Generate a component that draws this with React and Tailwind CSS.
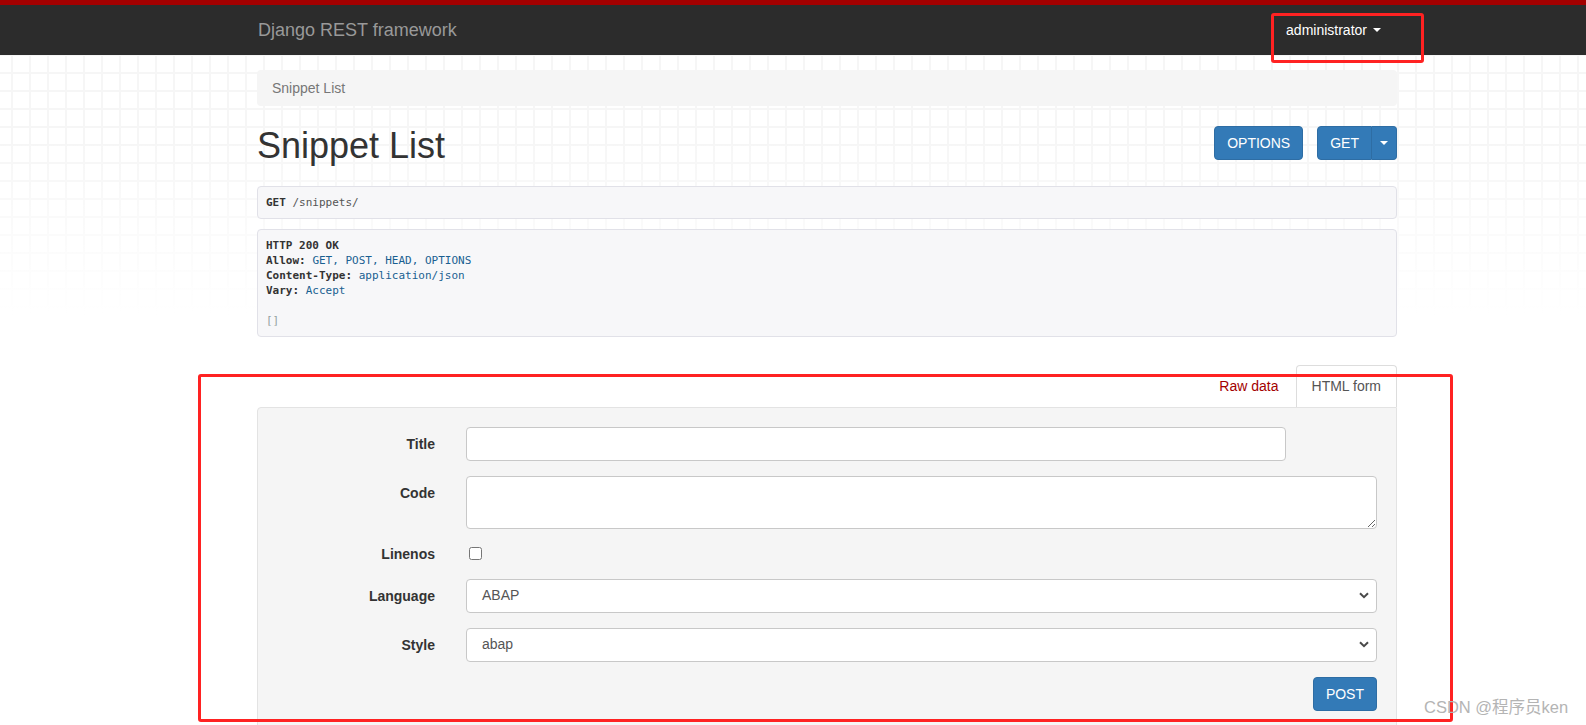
import React from "react";

function Caret({ className = "" }) {
  return (
    <span
      className={
        "inline-block w-0 h-0 border-t-[4px] border-l-[4px] border-r-[4px] border-l-transparent border-r-transparent border-t-white " +
        className
      }
    />
  );
}

function Chevron() {
  return (
    <svg width="10" height="7" viewBox="0 0 10 7" className="mr-[5px]">
      <path d="M1 1.2 L5 5.2 L9 1.2" fill="none" stroke="#4a4a4a" strokeWidth="2" />
    </svg>
  );
}

function FakeSelect({ value }) {
  return (
    <div className="h-[34px] w-full border border-[#c8c8c8] rounded-[4px] bg-white flex items-center justify-between pl-[15px] pr-[2px] text-[14px] text-[#555]">
      <span>{value}</span>
      <Chevron />
    </div>
  );
}

export default function App() {
  const mono = "font-['DejaVu_Sans_Mono',monospace]";
  return (
    <div className="relative h-[725px] w-[1586px] overflow-hidden bg-white font-['Liberation_Sans',Arial,sans-serif] text-[14px] text-[#333]">
      {/* Navbar */}
      <div className="h-[55px] border-t-[5px] border-[#a30000] bg-[#2c2c2c]">
        <div className="ml-[257px] w-[1140px] h-full flex items-center justify-between">
          <span className="ml-[1px] text-[18px] text-[#999] leading-[20px]">Django REST framework</span>
          <span className="text-white text-[14px] leading-[20px] pr-[16px] flex items-center">
            administrator
            <Caret className="ml-[6px]" />
          </span>
        </div>
      </div>

      {/* Body with grid background */}
      <div className="pt-[15px] pb-[40px] [background-image:linear-gradient(to_bottom,rgba(255,255,255,0)_80px,#fff_260px),linear-gradient(to_right,#f6f6f6_2px,transparent_2px),linear-gradient(to_bottom,#f6f6f6_2px,transparent_2px)] [background-size:100%_100%,18px_18px,18px_18px] [background-position:0_0,11px_0,0_17px]">
        <div className="ml-[257px] w-[1140px]">
          {/* Breadcrumb */}
          <div className="h-[36px] bg-[#f5f5f5] rounded-[4px] px-[15px] flex items-center text-[#777] leading-[20px]">
            Snippet List
          </div>

          {/* Header */}
          <div className="mt-[20px] flex items-start justify-between">
            <h1 className="text-[36px] leading-[39.6px] font-normal text-[#333]">Snippet List</h1>
            <div className="flex gap-[14px]">
              <button className="h-[34px] px-[12px] bg-[#337ab7] border border-[#2e6da4] rounded-[4px] text-white text-[14px] leading-[20px]">
                OPTIONS
              </button>
              <div className="flex">
                <button className="h-[34px] px-[12px] bg-[#337ab7] border border-[#2e6da4] rounded-l-[4px] text-white text-[14px] leading-[20px]">
                  GET
                </button>
                <button className="h-[34px] w-[25px] bg-[#337ab7] border border-l-[#255d8f] border-y-[#2e6da4] border-r-[#2e6da4] border-l-0 rounded-r-[4px] flex items-center justify-center">
                  <Caret />
                </button>
              </div>
            </div>
          </div>

          {/* Request */}
          <div className={"mt-[20px] border border-[#e1e1e8] bg-[#f7f7f9] rounded-[4px] px-[8px] py-[8px] text-[11px] leading-[15px] " + mono}>
            <b className="text-[#333]">GET</b> <span className="text-[#555]">/snippets/</span>
          </div>

          {/* Response */}
          <div className={"mt-[10px] border border-[#e1e1e8] bg-[#f7f7f9] rounded-[4px] px-[8px] py-[8px] text-[11px] leading-[15px] " + mono}>
            <div><b className="text-[#333]">HTTP 200 OK</b></div>
            <div><b className="text-[#333]">Allow:</b> <span className="text-[#195f91]">GET, POST, HEAD, OPTIONS</span></div>
            <div><b className="text-[#333]">Content-Type:</b> <span className="text-[#195f91]">application/json</span></div>
            <div><b className="text-[#333]">Vary:</b> <span className="text-[#195f91]">Accept</span></div>
            <div className="h-[15px]" />
            <div className="text-[#93a1a1]">[]</div>
          </div>

          {/* Tabs */}
          <div className="mt-[28px] flex justify-end">
            <div className="h-[42px] px-[15px] mr-[2px] flex items-center text-[#a30000] leading-[20px] whitespace-nowrap">Raw data</div>
            <div className="h-[42px] px-[15px] flex items-center border-t border-l border-r border-[#ddd] rounded-t-[4px] bg-white text-[#555] leading-[20px] whitespace-nowrap">
              HTML form
            </div>
          </div>

          {/* Form panel */}
          <div className="border border-[#e3e3e3] bg-[#f5f5f5] rounded-b-[4px] rounded-tl-[4px] pt-[19px] px-[19px] pb-[19px]">
            <div className="grid grid-cols-[158px_1fr] gap-x-[31px]">
              {/* Title */}
              <label className="text-right font-bold pt-[7px] leading-[20px] text-[#333]">Title</label>
              <div>
                <input type="text" className="h-[34px] w-[820px] border border-[#c8c8c8] rounded-[4px] bg-white px-[12px] outline-none" />
              </div>

              {/* Code */}
              <label className="mt-[15px] text-right font-bold pt-[7px] leading-[20px] text-[#333]">Code</label>
              <div className="mt-[15px]">
                <textarea className="block h-[53px] w-full border border-[#c8c8c8] rounded-[4px] bg-white px-[12px] py-[6px] outline-none" />
              </div>

              {/* Linenos */}
              <label className="mt-[15px] text-right font-bold leading-[20px] text-[#333]">Linenos</label>
              <div className="mt-[15px] h-[20px]">
                <input type="checkbox" className="m-0 mt-[3px] ml-[3px] w-[13px] h-[13px] block" />
              </div>

              {/* Language */}
              <label className="mt-[15px] text-right font-bold pt-[7px] leading-[20px] text-[#333]">Language</label>
              <div className="mt-[15px]">
                <FakeSelect value="ABAP" />
              </div>

              {/* Style */}
              <label className="mt-[15px] text-right font-bold pt-[7px] leading-[20px] text-[#333]">Style</label>
              <div className="mt-[15px]">
                <FakeSelect value="abap" />
              </div>

              {/* Post */}
              <div className="mt-[15px]" />
              <div className="mt-[15px] flex justify-end">
                <button className="h-[34px] px-[12px] bg-[#337ab7] border border-[#2e6da4] rounded-[4px] text-white text-[14px] leading-[20px]">
                  POST
                </button>
              </div>
            </div>
            <div className="h-[20px]" />
          </div>
        </div>
      </div>

      {/* Annotation overlays */}
      <div className="pointer-events-none absolute left-[1271px] top-[13px] w-[153px] h-[50px] border-[3px] border-[#ff2222] rounded-[3px]" />
      <div className="pointer-events-none absolute left-[198px] top-[374px] w-[1255px] h-[348px] border-[3px] border-[#ff2222] rounded-[3px]" />

      {/* Watermark */}
      <div className="pointer-events-none absolute left-[1424px] top-[696px] text-[16.5px] leading-[22px] text-[#b4b4b4] font-['Liberation_Sans','Noto_Sans_CJK_SC',sans-serif] whitespace-nowrap">
        CSDN @程序员ken
      </div>
    </div>
  );
}
